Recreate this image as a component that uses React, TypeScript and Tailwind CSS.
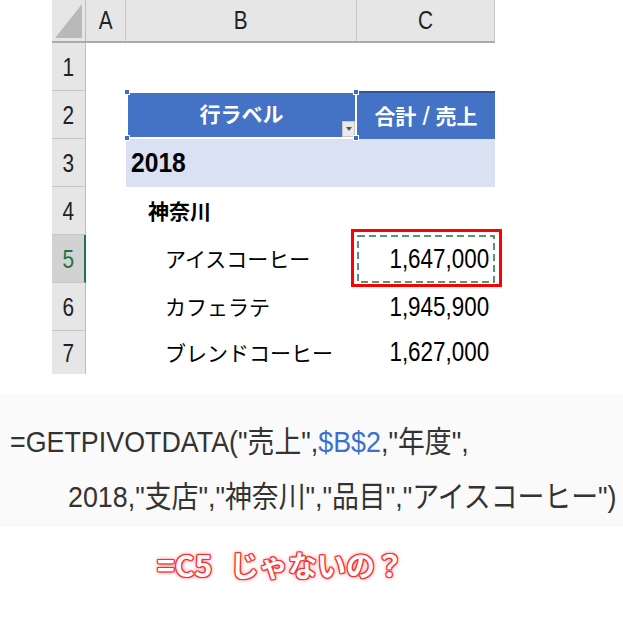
const latin = 'font-["Liberation_Sans","Noto_Sans_CJK_JP",sans-serif]';
const jp = 'font-["Noto_Sans_CJK_JP",sans-serif]';

function RowHead({ n, active, h = 'h-[48px]' }: { n: number; active?: boolean; h?: string }) {
  return (
    <div
      className={`${h} w-[34px] flex items-center justify-center border-b border-[#c6c6c6] text-[26px] leading-none ${latin} ${
        active ? 'bg-[#d2d2d2] text-[#217346] border-r-2 border-r-[#217346]' : 'bg-[#e6e6e6] text-[#222] border-r border-r-[#bdbdbd]'
      }`}
    >
      <span className="inline-block scale-x-[0.8]">{n}</span>
    </div>
  );
}

function Num({ v }: { v: string }) {
  return <span className={`${latin} inline-block origin-right scale-x-[0.83] text-[27px] leading-none text-black`}>{v}</span>;
}

export default function App() {
  return (
    <div className="w-[623px] h-[623px] bg-white overflow-hidden relative">
      {/* sheet */}
      <div className="ml-[52px] w-[443px] relative">
        {/* column headers */}
        <div className={`flex h-[43px] bg-[#e6e6e6] border-b-2 border-[#ababab] ${latin} text-[26px] text-[#222]`}>
          <div className="w-[34px] border-r border-[#bdbdbd] flex items-end justify-end p-[3px]">
            <div className="w-[27px] h-[34px] bg-[#b9b9b9] [clip-path:polygon(100%_0,100%_100%,0_100%)]" />
          </div>
          <div className="w-[40px] border-r border-[#c6c6c6] flex items-center justify-center">
            <span className="inline-block scale-x-[0.8]">A</span>
          </div>
          <div className="w-[231px] border-r border-[#c6c6c6] flex items-center justify-center">
            <span className="inline-block scale-x-[0.8]">B</span>
          </div>
          <div className="w-[138px] border-r border-[#c6c6c6] flex items-center justify-center">
            <span className="inline-block scale-x-[0.8]">C</span>
          </div>
        </div>

        <div className="flex">
          <div className="flex flex-col">
            <RowHead n={1} />
            <RowHead n={2} />
            <RowHead n={3} />
            <RowHead n={4} />
            <RowHead n={5} active />
            <RowHead n={6} />
            <RowHead n={7} h="h-[43px] border-b-0" />
          </div>
          <div className="flex flex-col w-[409px]">
            <div className="h-[48px]" />
            {/* row 2 */}
            <div className={`flex h-[48px] ml-[40px] w-[369px] ${jp} text-[21px] font-bold text-white`}>
              <div className="relative w-[231px] bg-[#4472c4] border-2 border-white flex items-center justify-center">
                <span className="-mt-[2px]">行ラベル</span>
                <div className="absolute right-[0px] bottom-[0px] w-[13px] h-[16px] bg-[#eaeaea] border border-[#c8c8c8] flex items-center justify-center">
                  <div className="w-0 h-0 border-l-[3px] border-r-[3px] border-t-[4px] border-l-transparent border-r-transparent border-t-[#555]" />
                </div>
                <div className="absolute -left-[4px] -top-[4px] w-[6px] h-[6px] bg-[#3a6fd0] border border-white" />
                <div className="absolute -left-[4px] -bottom-[4px] w-[6px] h-[6px] bg-[#3a6fd0] border border-white" />
                <div className="absolute -right-[4px] -top-[4px] w-[6px] h-[6px] bg-[#3a6fd0] border border-white" />
                <div className="absolute -right-[4px] -bottom-[4px] w-[6px] h-[6px] bg-[#3a6fd0] border border-white" />
              </div>
              <div className="w-[138px] bg-[#4472c4] border-t-2 border-[#2f5597] flex items-center justify-center gap-[6px]">
                <span>合計</span>
                <span className={`${latin} text-[26px] font-normal`}>/</span>
                <span>売上</span>
              </div>
            </div>
            {/* row 3 */}
            <div className="flex h-[48px] ml-[40px] w-[369px] bg-[#d9e1f2] items-center pl-[5px]">
              <span className={`${latin} inline-block origin-left scale-x-[0.88] text-[28px] font-bold text-black leading-none`}>2018</span>
            </div>
            {/* row 4 */}
            <div className={`flex h-[48px] ml-[40px] items-center pl-[22px] ${jp} text-[21px] font-bold text-black`}>
              神奈川
            </div>
            {/* rows 5-7 */}
            {[
              ['アイスコーヒー', '1,647,000'],
              ['カフェラテ', '1,945,900'],
              ['ブレンドコーヒー', '1,627,000'],
            ].map(([name, v], i) => (
              <div key={name} className={`flex ${i === 2 ? 'h-[43px]' : 'h-[48px]'} ml-[40px]`}>
                <div className={`w-[231px] flex items-center pl-[39px] ${jp} text-[21px] text-black`}>{name}</div>
                <div className="relative w-[138px] flex items-center justify-end pr-[6px]">
                  {i === 0 && (
                    <svg className="absolute inset-0" width="138" height="48">
                      <rect x="1" y="1" width="136" height="46" fill="none" stroke="#217346" strokeWidth="1.5" strokeDasharray="7 4" />
                    </svg>
                  )}
                  <Num v={v} />
                </div>
              </div>
            ))}
          </div>
        </div>

        {/* red highlight */}
        <div className="absolute left-[299px] top-[229px] w-[151px] h-[58px] border-[3px] border-[#ff0000]" />
      </div>

      {/* formula */}
      <div className={`mt-[20px] h-[133px] bg-[#fafafa] flex flex-col justify-center pl-[10px] pt-[18px] text-[#333] ${latin} text-[30px] leading-none`}>
        <div className="origin-left scale-x-[0.895] whitespace-nowrap">
          =GETPIVOTDATA("売上",<span className="text-[#3b6fd0]">$B$2</span>,"年度",
        </div>
        <div className="origin-left scale-x-[0.895] whitespace-nowrap mt-[25px] ml-[58px]">
          2018,"支店","神奈川","品目","アイスコーヒー")
        </div>
      </div>

      {/* caption */}
      <div className="mt-[22px] pl-[157px] flex items-center">
        <span
          className={`${jp} text-[29px] font-bold leading-none text-white [text-shadow:1px_0_0_#ff2a2a,-1px_0_0_#ff2a2a,0_1px_0_#ff2a2a,0_-1px_0_#ff2a2a,1px_1px_0_#ff2a2a,-1px_-1px_0_#ff2a2a,1px_-1px_0_#ff2a2a,-1px_1px_0_#ff2a2a,0_0_3px_#ff4040,0_0_5px_#ff7070]`}
        >
          <span className="text-[30px]">=C5</span>
          <span className="ml-[18px]">じゃないの？</span>
        </span>
      </div>
    </div>
  );
}
